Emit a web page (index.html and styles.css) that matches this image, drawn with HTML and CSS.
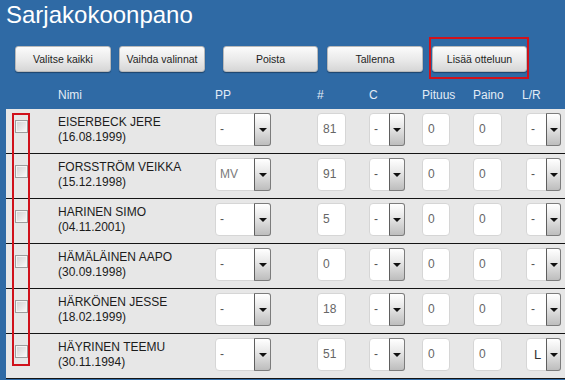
FILE: index.html
```html
<!DOCTYPE html>
<html lang="fi">
<head>
<meta charset="utf-8">
<title>Sarjakokoonpano</title>
<link rel="stylesheet" href="styles.css">
</head>
<body>
<div class="page">
  <h1 class="title">Sarjakokoonpano</h1>
  <div class="toolbar">
    <button class="btn b1">Valitse kaikki</button>
    <button class="btn b2">Vaihda valinnat</button>
    <button class="btn b3">Poista</button>
    <button class="btn b4">Tallenna</button>
    <div class="highlight"><button class="btn b5">Lisää otteluun</button></div>
  </div>
  <div class="grid thead">
    <span></span><span>Nimi</span><span>PP</span><span>#</span><span>C</span><span>Pituus</span><span>Paino</span><span class="lr-h">L/R</span>
  </div>
  <div class="tbody">
    <div class="mark"></div>

    <div class="grid row">
      <div class="cb-cell"><span class="cb"></span></div>
      <div class="name">EISERBECK JERE<br>(16.08.1999)</div>
      <div class="sel w-pp"><span class="val">-</span><span class="dd"><i></i></span></div>
      <div class="inp w-num">81</div>
      <div class="sel w-c"><span class="val">-</span><span class="dd"><i></i></span></div>
      <div class="inp w-pit">0</div>
      <div class="inp w-pai">0</div>
      <div class="sel w-lr"><span class="val">-</span><span class="dd"><i></i></span></div>
    </div>

    <div class="grid row">
      <div class="cb-cell"><span class="cb"></span></div>
      <div class="name">FORSSTRÖM VEIKKA<br>(15.12.1998)</div>
      <div class="sel w-pp"><span class="val mv">MV</span><span class="dd"><i></i></span></div>
      <div class="inp w-num">91</div>
      <div class="sel w-c"><span class="val">-</span><span class="dd"><i></i></span></div>
      <div class="inp w-pit">0</div>
      <div class="inp w-pai">0</div>
      <div class="sel w-lr"><span class="val">-</span><span class="dd"><i></i></span></div>
    </div>

    <div class="grid row">
      <div class="cb-cell"><span class="cb"></span></div>
      <div class="name">HARINEN SIMO<br>(04.11.2001)</div>
      <div class="sel w-pp"><span class="val">-</span><span class="dd"><i></i></span></div>
      <div class="inp w-num">5</div>
      <div class="sel w-c"><span class="val">-</span><span class="dd"><i></i></span></div>
      <div class="inp w-pit">0</div>
      <div class="inp w-pai">0</div>
      <div class="sel w-lr"><span class="val">-</span><span class="dd"><i></i></span></div>
    </div>

    <div class="grid row">
      <div class="cb-cell"><span class="cb"></span></div>
      <div class="name">HÄMÄLÄINEN AAPO<br>(30.09.1998)</div>
      <div class="sel w-pp"><span class="val">-</span><span class="dd"><i></i></span></div>
      <div class="inp w-num">0</div>
      <div class="sel w-c"><span class="val">-</span><span class="dd"><i></i></span></div>
      <div class="inp w-pit">0</div>
      <div class="inp w-pai">0</div>
      <div class="sel w-lr"><span class="val">-</span><span class="dd"><i></i></span></div>
    </div>

    <div class="grid row">
      <div class="cb-cell"><span class="cb"></span></div>
      <div class="name">HÄRKÖNEN JESSE<br>(18.02.1999)</div>
      <div class="sel w-pp"><span class="val">-</span><span class="dd"><i></i></span></div>
      <div class="inp w-num">18</div>
      <div class="sel w-c"><span class="val">-</span><span class="dd"><i></i></span></div>
      <div class="inp w-pit">0</div>
      <div class="inp w-pai">0</div>
      <div class="sel w-lr"><span class="val">-</span><span class="dd"><i></i></span></div>
    </div>

    <div class="grid row">
      <div class="cb-cell"><span class="cb"></span></div>
      <div class="name">HÄYRINEN TEEMU<br>(30.11.1994)</div>
      <div class="sel w-pp"><span class="val">-</span><span class="dd"><i></i></span></div>
      <div class="inp w-num">51</div>
      <div class="sel w-c"><span class="val">-</span><span class="dd"><i></i></span></div>
      <div class="inp w-pit">0</div>
      <div class="inp w-pai">0</div>
      <div class="sel w-lr"><span class="val l">L</span><span class="dd"><i></i></span></div>
    </div>
  </div>
</div>
</body>
</html>
```
FILE: styles.css
```css
html, body {
  margin: 0;
  padding: 0;
  background: #2f6aa5;
  overflow: hidden;
}
body {
  width: 565px;
  height: 380px;
  font-family: "Liberation Sans", Arial, sans-serif;
}
.page {
  width: 565px;
}
.title {
  margin: 0;
  padding: 1px 0 0 6px;
  font-size: 24px;
  line-height: 28px;
  font-weight: normal;
  color: #ffffff;
}
.toolbar {
  display: flex;
  align-items: flex-start;
  margin-top: 17px;
  padding-left: 15px;
  height: 26px;
}
.btn {
  box-sizing: border-box;
  height: 26px;
  padding: 0;
  border: 1px solid #b9b9b9;
  border-radius: 3px;
  background: linear-gradient(#fbfbfb, #e9e9e9 55%, #d6d6d6);
  box-shadow: 0 1px 1px rgba(0, 0, 0, 0.35);
  font-family: "Liberation Sans", Arial, sans-serif;
  font-size: 10.5px;
  color: #1e1e1e;
}
.b1 { width: 96px; }
.b2 { width: 86px; margin-left: 8px; }
.b3 { width: 95px; margin-left: 18px; }
.b4 { width: 96px; margin-left: 9px; }
.b5 { width: 95px; display: block; }
.highlight {
  margin: -9px 0 -7px 6px;
  padding: 7px 0 5px 1px;
  border: 2px solid #d0121c;
}
.grid {
  display: grid;
  grid-template-columns: 52px 157px 102px 52px 53px 51px 53px 1fr;
}
.thead {
  margin-left: 6px;
  padding: 15px 0 6px 0;
  font-size: 12px;
  line-height: 16px;
  color: #e3ecf6;
}
.lr-h {
  margin-left: -4px;
}
.tbody {
  position: relative;
  margin-left: 6px;
  background: #e7e7e7;
}
.mark {
  position: absolute;
  left: 6px;
  top: 4px;
  width: 18px;
  height: 253px;
  box-sizing: border-box;
  border: 2px solid #d0121c;
}
.row {
  height: 44px;
  border-bottom: 1px solid #151515;
  align-items: start;
}
.cb-cell {
  padding: 11px 0 0 9px;
}
.cb {
  display: block;
  box-sizing: border-box;
  width: 13px;
  height: 13px;
  border: 1px solid #9c9c9c;
  background: linear-gradient(135deg, #d2d2d2, #e9e9e9 60%, #fbfbfb);
  box-shadow: inset 0 0 0 1px #f4f4f4;
}
.name {
  padding-top: 6px;
  font-size: 12px;
  line-height: 15px;
  color: #1c1c1c;
}
.sel, .inp {
  box-sizing: border-box;
  height: 33px;
  margin-top: 4px;
  background: #ffffff;
  border: 1px solid #d6d6d6;
  border-radius: 4px;
  font-size: 12px;
  color: #666666;
}
.inp {
  padding-left: 5px;
  line-height: 31px;
}
.sel {
  display: flex;
}
.val {
  flex: 1;
  padding-left: 4px;
  line-height: 31px;
  color: #555555;
}
.val.mv {
  color: #7a7a7a;
}
.val.l {
  padding-left: 7px;
  color: #333333;
  font-size: 13px;
}
.dd {
  box-sizing: border-box;
  width: 17px;
  margin: -1px -1px -1px 0;
  border: 1px solid #7c7c7c;
  border-left-color: #5e5e5e;
  border-radius: 0 3px 3px 0;
  background: linear-gradient(#ffffff, #ececec 35%, #bdbdbd);
  display: flex;
  align-items: center;
  justify-content: center;
}
.dd i {
  display: block;
  width: 0;
  height: 0;
  border-left: 4px solid transparent;
  border-right: 4px solid transparent;
  border-top: 4px solid #111111;
}
.w-pp { width: 56px; }
.w-num { width: 29px; }
.w-c { width: 36px; }
.w-c .dd { width: 16px; }
.w-pit { width: 28px; }
.w-pai { width: 29px; }
.w-lr { width: 35px; }
.w-lr .dd { width: 15px; }
```
